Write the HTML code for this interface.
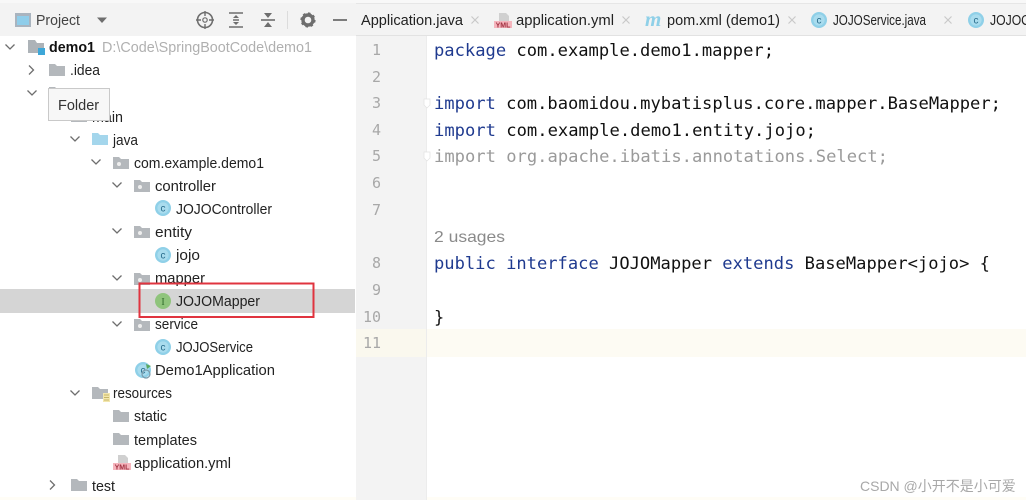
<!DOCTYPE html>
<html><head><meta charset="utf-8"><style>
html,body{margin:0;padding:0;background:#fff;width:1026px;height:500px;overflow:hidden}
svg{display:block;filter:blur(.35px)}
.t{font-family:"Liberation Sans",sans-serif;font-size:14.5px;fill:#222}
.m{font-family:"DejaVu Sans Mono","Liberation Mono",monospace;font-size:17px;fill:#111}
.k{fill:#1f3a8f}
.n{font-family:"DejaVu Sans Mono","Liberation Mono",monospace;font-size:15px;fill:#a8a8a8;text-anchor:end}
.x{stroke:#c8c8c8;stroke-width:1.2;fill:none}
.ch{fill:none;stroke:#6e6e6e;stroke-width:1.3}
</style></head><body>
<svg width="1026" height="500" viewBox="0 0 1026 500" xmlns="http://www.w3.org/2000/svg">
<defs>
<g id="folder"><path d="M0 0H6L8 2H16V12H0Z" fill="#b4b8bc"/></g>
<g id="pkg"><path d="M0 0H6L8 2H16V12H0Z" fill="#b4b8bc"/><circle cx="6" cy="7" r="2" fill="#eee"/></g>
<g id="c"><circle r="8" fill="#8fd0e8"/><circle r="5.6" fill="#a9dcee"/><text x="0" y="3.6" font-family="Liberation Sans" font-size="10" fill="#2a6d8c" text-anchor="middle">c</text></g>
<g id="v"><path d="M-4.5 -2.5L0 2L4.5 -2.5" class="ch"/></g>
<g id="r"><path d="M-2 -4.5L2.5 0L-2 4.5" class="ch"/></g>
<g id="cl"><path d="M-3.5 -3.5L3.5 3.5M3.5 -3.5L-3.5 3.5" class="x"/></g>
<g id="yml"><path d="M5 0H12L15 3V8H5Z" fill="#d0d0d0"/><rect x="0" y="8" width="18" height="7" fill="#f5b5bd"/><text x="9" y="14.5" font-family="Liberation Sans" font-size="7" font-weight="bold" fill="#a03040" text-anchor="middle">YML</text></g>
</defs>

<!-- header bars -->
<rect width="1026" height="36" fill="#f3f3f3"/>
<rect y="0" width="1026" height="3" fill="#f8f8f8"/>
<rect x="356" y="3" width="670" height="1" fill="#e6e6e6"/>
<rect x="356" y="35" width="670" height="1" fill="#e2e2e2"/>

<!-- project header -->
<rect x="15" y="13" width="16" height="14" fill="#a9b4bf"/>
<rect x="17" y="16" width="12" height="9" fill="#8fcdea"/>
<text x="36" y="25" class="t" style="fill:#444" textLength="44" lengthAdjust="spacingAndGlyphs">Project</text>
<path d="M97 17.5H107L102 23Z" fill="#6e6e6e"/>
<circle cx="205" cy="20" r="7.5" fill="none" stroke="#6e6e6e" stroke-width="1.6"/>
<circle cx="205" cy="20" r="2.2" fill="none" stroke="#6e6e6e" stroke-width="1.2"/>
<path d="M205 11V16M205 24V29M196 20H201M209 20H214" stroke="#6e6e6e" stroke-width="1.4"/>
<path d="M229 13H243M229 27H243M233 20H239" stroke="#6e6e6e" stroke-width="1.6"/>
<path d="M236 15L233 18H239ZM236 25L233 22H239Z" fill="#6e6e6e"/>
<path d="M261 20H275" stroke="#6e6e6e" stroke-width="1.6"/>
<path d="M268 18L264 13H272ZM268 22L264 27H272Z" fill="#6e6e6e"/>
<rect x="287" y="11" width="1" height="18" fill="#dcdcdc"/>
<circle cx="308" cy="20" r="5" fill="none" stroke="#6e6e6e" stroke-width="3.4"/>
<circle cx="308" cy="20" r="6.8" fill="none" stroke="#6e6e6e" stroke-width="1.6" stroke-dasharray="2.6 2.7"/>
<path d="M333 20H347" stroke="#6e6e6e" stroke-width="1.8"/>

<!-- selection + highlight -->
<rect x="0" y="289" width="355" height="24" fill="#d5d5d5"/>
<rect x="0" y="497" width="1026" height="3" fill="#fffdf6"/>

<!-- tree -->
<use href="#v" x="10" y="47"/>
<path d="M28 40H35L37 43H44V53H28Z" fill="#adb3b8"/><rect x="38" y="48" width="7" height="7" fill="#3ea7d8"/>
<text x="49" y="52" class="t" style="font-weight:bold;fill:#111" textLength="46" lengthAdjust="spacingAndGlyphs">demo1</text>
<text x="102" y="52" class="t" style="fill:#b0b0b0" textLength="210" lengthAdjust="spacingAndGlyphs">D:\Code\SpringBootCode\demo1</text>

<use href="#r" x="31" y="70"/><use href="#folder" x="49" y="64"/>
<text x="70" y="75" class="t" textLength="30" lengthAdjust="spacingAndGlyphs">.idea</text>
<use href="#v" x="32" y="93"/><use href="#folder" x="49" y="87"/>

<use href="#folder" x="71" y="110"/>
<text x="92" y="122" class="t" textLength="31" lengthAdjust="spacingAndGlyphs">main</text>

<rect x="48.500" y="88.500" width="61" height="32" fill="#f7f7f7" stroke="#c9c9c9"/>
<text x="58" y="110" class="t" style="fill:#333">Folder</text>

<use href="#v" x="75" y="139"/>
<path d="M92 133H98L100 135H108V145H92Z" fill="#a4d6ec"/>
<text x="113" y="145" class="t" textLength="25" lengthAdjust="spacingAndGlyphs">java</text>

<use href="#v" x="96" y="162"/><use href="#pkg" x="113" y="157"/>
<text x="134" y="168" class="t" textLength="130" lengthAdjust="spacingAndGlyphs">com.example.demo1</text>

<use href="#v" x="117" y="185"/><use href="#pkg" x="134" y="180"/>
<text x="155" y="191" class="t" textLength="61" lengthAdjust="spacingAndGlyphs">controller</text>
<use href="#c" x="163" y="208"/>
<text x="176" y="214" class="t" textLength="96" lengthAdjust="spacingAndGlyphs">JOJOController</text>

<use href="#v" x="117" y="231"/><use href="#pkg" x="134" y="226"/>
<text x="155" y="237" class="t" textLength="37" lengthAdjust="spacingAndGlyphs">entity</text>
<use href="#c" x="163" y="255"/>
<text x="176" y="260" class="t" textLength="24" lengthAdjust="spacingAndGlyphs">jojo</text>

<use href="#v" x="117" y="278"/><use href="#pkg" x="134" y="273"/>
<text x="155" y="283" class="t" textLength="50" lengthAdjust="spacingAndGlyphs">mapper</text>
<circle cx="163" cy="301" r="8" fill="#8fc47c"/>
<text x="163" y="305" font-family="Liberation Serif" font-size="10" fill="#2f6a2a" text-anchor="middle">I</text>
<text x="176" y="306" class="t" textLength="84" lengthAdjust="spacingAndGlyphs">JOJOMapper</text>

<use href="#v" x="117" y="324"/><use href="#pkg" x="134" y="319"/>
<text x="155" y="329" class="t" textLength="43" lengthAdjust="spacingAndGlyphs">service</text>
<use href="#c" x="163" y="347"/>
<text x="176" y="352" class="t" textLength="77" lengthAdjust="spacingAndGlyphs">JOJOService</text>

<use href="#c" x="143" y="370"/>
<path d="M146 364L151 366L147 369Z" fill="#5aa860"/>
<circle cx="146" cy="374" r="4" fill="none" stroke="#7a9aaa" stroke-width="1.2"/>
<text x="155" y="375" class="t" textLength="120" lengthAdjust="spacingAndGlyphs">Demo1Application</text>

<use href="#v" x="75" y="393"/><use href="#folder" x="92" y="387"/>
<rect x="103" y="393" width="7" height="9" fill="#f3e7ae"/>
<path d="M104 395H109M104 397.500H109M104 400H109" stroke="#b9a650" stroke-width=".8"/>
<text x="113" y="398" class="t" textLength="59" lengthAdjust="spacingAndGlyphs">resources</text>

<use href="#folder" x="113" y="410"/>
<text x="134" y="421" class="t" textLength="33" lengthAdjust="spacingAndGlyphs">static</text>
<use href="#folder" x="113" y="433"/>
<text x="134" y="445" class="t" textLength="63" lengthAdjust="spacingAndGlyphs">templates</text>
<use href="#yml" x="113" y="455"/>
<text x="134" y="468" class="t" textLength="97" lengthAdjust="spacingAndGlyphs">application.yml</text>

<use href="#r" x="52" y="485"/><use href="#folder" x="71" y="479"/>
<text x="92" y="491" class="t" textLength="23" lengthAdjust="spacingAndGlyphs">test</text>

<!-- red box -->
<rect x="139.500" y="283.500" width="174" height="33.500" fill="none" stroke="#e0343f" stroke-width="2"/>

<!-- gutter -->
<rect x="356" y="36" width="70" height="464" fill="#f3f3f3"/>
<rect x="356" y="329" width="70" height="28" fill="#faf8ee"/>
<rect x="426" y="36" width="1" height="464" fill="#ececec"/>
<rect x="427" y="329" width="599" height="28" fill="#fdfbf3"/>

<!-- tabs -->
<text x="361" y="25" class="t" textLength="102" lengthAdjust="spacingAndGlyphs">Application.java</text>
<use href="#cl" x="475" y="20"/>
<use href="#yml" x="494" y="13"/>
<text x="516" y="25" class="t" textLength="98" lengthAdjust="spacingAndGlyphs">application.yml</text>
<use href="#cl" x="626" y="20"/>
<text x="645" y="26" font-family="Liberation Serif" font-style="italic" font-weight="bold" font-size="21" fill="#8fd0e8">m</text>
<text x="667" y="25" class="t" textLength="113" lengthAdjust="spacingAndGlyphs">pom.xml (demo1)</text>
<use href="#cl" x="792" y="20"/>
<use href="#c" x="819" y="20"/>
<text x="833" y="25" class="t" textLength="93" lengthAdjust="spacingAndGlyphs">JOJOService.java</text>
<use href="#cl" x="948" y="20"/>
<use href="#c" x="976" y="20"/>
<text x="990" y="25" class="t" textLength="40" lengthAdjust="spacingAndGlyphs">JOJOC</text>

<!-- line numbers -->
<text x="381" y="55" class="n">1</text>
<text x="381" y="82" class="n">2</text>
<text x="381" y="108" class="n">3</text>
<text x="381" y="135" class="n">4</text>
<text x="381" y="161" class="n">5</text>
<text x="381" y="188" class="n">6</text>
<text x="381" y="215" class="n">7</text>
<text x="381" y="268" class="n">8</text>
<text x="381" y="295" class="n">9</text>
<text x="381" y="322" class="n">10</text>
<text x="381" y="348" class="n">11</text>

<!-- code -->
<text x="434" y="56" class="m" textLength="340" lengthAdjust="spacingAndGlyphs"><tspan class="k">package</tspan> com.example.demo1.mapper;</text>
<path d="M427 99H430V105L427 108L424 105V99Z" fill="#fff" stroke="#e2e2e2" stroke-width=".7"/>
<text x="434" y="109" class="m" textLength="567" lengthAdjust="spacingAndGlyphs"><tspan class="k">import</tspan> com.baomidou.mybatisplus.core.mapper.BaseMapper;</text>
<text x="434" y="136" class="m" textLength="382" lengthAdjust="spacingAndGlyphs"><tspan class="k">import</tspan> com.example.demo1.entity.jojo;</text>
<path d="M427 152H430V158L427 161L424 158V152Z" fill="#fff" stroke="#e2e2e2" stroke-width=".7"/>
<text x="434" y="162" class="m" style="fill:#9a9a9a" textLength="454" lengthAdjust="spacingAndGlyphs">import org.apache.ibatis.annotations.Select;</text>
<text x="434" y="242" class="t" style="fill:#8a8a8a;font-size:16px" textLength="71" lengthAdjust="spacingAndGlyphs">2 usages</text>
<text x="434" y="269" class="m" textLength="556" lengthAdjust="spacingAndGlyphs"><tspan class="k">public</tspan> <tspan class="k">interface</tspan> JOJOMapper <tspan class="k">extends</tspan> BaseMapper&lt;jojo&gt; {</text>
<text x="434" y="323" class="m">}</text>

<!-- watermark -->
<text x="860" y="491" font-family="'Liberation Sans','Noto Sans CJK SC',sans-serif" font-size="14" fill="#a8a8a8">CSDN @小开不是小可爱</text>
</svg>
</body></html>
